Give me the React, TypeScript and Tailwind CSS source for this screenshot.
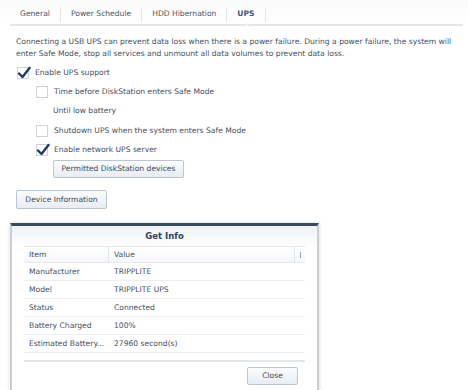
import React from "react";

const font = { fontFamily: '"DejaVu Sans", Verdana, sans-serif' };

function Check({ checked }: { checked?: boolean }) {
  return (
    <span className="relative flex h-[12px] w-[12px] shrink-0 items-center justify-center border border-[#cfd4da] bg-white">
      {checked && (
        <svg viewBox="0 0 14 14" className="absolute left-[-1px] top-[-2px] h-[14px] w-[14px]">
          <path d="M2 7.5 L5.5 11 L12.5 2" fill="none" stroke="#1e3a66" strokeWidth="2.4" strokeLinecap="round" strokeLinejoin="round" />
        </svg>
      )}
    </span>
  );
}

function Btn({ children, className = "" }: { children: React.ReactNode; className?: string }) {
  return (
    <div
      className={`flex items-center justify-center rounded-[2px] border border-[#bcc6d0] bg-gradient-to-b from-[#fbfcfd] to-[#e8edf2] text-[#3c4a5c] ${className}`}
    >
      {children}
    </div>
  );
}

const tabs = ["General", "Power Schedule", "HDD Hibernation", "UPS"];

const rows: [string, string][] = [
  ["Manufacturer", "TRIPPLITE"],
  ["Model", "TRIPPLITE UPS"],
  ["Status", "Connected"],
  ["Battery Charged", "100%"],
  ["Estimated Battery...", "27960 second(s)"],
];

export default function App() {
  return (
    <div className="h-[390px] w-[468px] overflow-hidden bg-white text-[7.6px] text-[#44505e]" style={font}>
      {/* tabs */}
      <div className="bg-gradient-to-b from-[#fafbfc] to-white pl-[10px] pr-[5px]">
        <div className="flex h-[26px] items-center border-b-2 border-[#e3e7eb] pt-[4px]">
          {tabs.map((t, i) => (
            <div
              key={t}
              className={`relative flex h-[15px] items-center border-r border-[#e4e7ea] ${i === 0 ? "pl-[10px] pr-[10px]" : "px-[10px]"} ${
                t === "UPS" ? "font-bold text-[#3b5478]" : "text-[#4a5563]"
              }`}
            >
              {t}
              {t === "UPS" && (
                <span className="absolute bottom-[-7px] left-[17px] h-[5px] w-[5px] rotate-45 border-l border-t border-[#e3e7eb] bg-white" />
              )}
            </div>
          ))}
        </div>
      </div>

      <div className="px-[16px]">
        <p className="mt-[10px] leading-[12px]">
          Connecting a USB UPS can prevent data loss when there is a power failure. During a power failure, the system will
          enter Safe Mode, stop all services and unmount all data volumes to prevent data loss.
        </p>

        <div className="mt-[3px] flex h-[19px] items-center gap-[6px] pl-[1px]">
          <Check checked />
          <span>Enable UPS support</span>
        </div>

        <div className="pl-[20px]">
          <div className="flex h-[19px] items-center gap-[6px]">
            <Check />
            <span>Time before DiskStation enters Safe Mode</span>
          </div>
          <div className="flex h-[20px] items-center pl-[17px]">Until low battery</div>
          <div className="flex h-[19px] items-center gap-[6px]">
            <Check />
            <span>Shutdown UPS when the system enters Safe Mode</span>
          </div>
          <div className="flex h-[19px] items-center gap-[6px]">
            <Check checked />
            <span>Enable network UPS server</span>
          </div>
          <Btn className="ml-[17px] mt-[1px] h-[18px] w-[131px]">Permitted DiskStation devices</Btn>
        </div>

        <Btn className="mt-[12px] h-[19px] w-[91px]">Device Information</Btn>
      </div>

      {/* dialog */}
      <div className="ml-[10px] mt-[14px] w-[309px] border-x-2 border-t-[3px] border-x-[#c9ced4] border-t-[#3a4a5d] bg-white shadow-[0_0_4px_rgba(0,0,0,0.15)]">
        <div className="flex h-[20px] items-center justify-center bg-gradient-to-b from-[#eef2f7] to-white text-[8.5px] font-bold text-[#2c4266]">
          Get Info
        </div>
        <div className="px-[12px]">
          <div className="flex h-[17px] items-center border-y border-[#e6e9ec] bg-gradient-to-b from-white to-[#f6f7f9]">
            <div className="flex h-full w-[85px] items-center border-r border-[#e3e6e9] pl-[5px]">Item</div>
            <div className="flex h-full flex-1 items-center border-r border-[#e3e6e9] pl-[5px]">Value</div>
            <div className="flex h-full w-[10px] items-center justify-center">
              <span className="h-[6px] w-[1px] bg-[#9aa3ad]" />
            </div>
          </div>
          {rows.map(([k, v]) => (
            <div key={k} className="flex h-[18px] items-center border-b border-[#eceef0]">
              <div className="w-[85px] truncate pl-[5px]">{k}</div>
              <div className="pl-[5px]">{v}</div>
            </div>
          ))}
          <div className="mt-[7px] border-t-2 border-[#e3e6ea]" />
          <div className="flex justify-end pr-[7px] pt-[5px]">
            <Btn className="h-[18px] w-[51px]">Close</Btn>
          </div>
        </div>
        <div className="h-[20px]" />
      </div>
    </div>
  );
}
